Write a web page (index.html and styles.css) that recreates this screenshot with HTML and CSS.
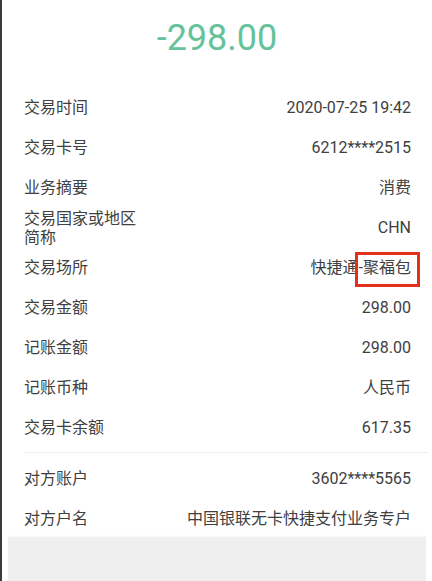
FILE: index.html
```html
<!DOCTYPE html>
<html lang="zh">
<head>
<meta charset="utf-8">
<link rel="stylesheet" href="styles.css">
</head>
<body>
<div class="page">
  <div class="amount">-298.00</div>
  <div class="group">
    <div class="row"><span class="label">交易时间</span><span class="value">2020-07-25 19:42</span></div>
    <div class="row"><span class="label">交易卡号</span><span class="value">6212****2515</span></div>
    <div class="row"><span class="label">业务摘要</span><span class="value">消费</span></div>
    <div class="row"><span class="label two">交易国家或地区<br>简称</span><span class="value">CHN</span></div>
    <div class="row"><span class="label">交易场所</span><span class="value mark-wrap">快捷通-聚福包<span class="mark"></span></span></div>
    <div class="row"><span class="label">交易金额</span><span class="value">298.00</span></div>
    <div class="row"><span class="label">记账金额</span><span class="value">298.00</span></div>
    <div class="row"><span class="label">记账币种</span><span class="value">人民币</span></div>
    <div class="row"><span class="label">交易卡余额</span><span class="value">617.35</span></div>
  </div>
  <div class="divider"></div>
  <div class="group second">
    <div class="row"><span class="label">对方账户</span><span class="value">3602****5565</span></div>
    <div class="row"><span class="label">对方户名</span><span class="value">中国银联无卡快捷支付业务专户</span></div>
  </div>
  <div class="footer"></div>
</div>
</body>
</html>
```
FILE: styles.css
```css
html, body {
  margin: 0;
  padding: 0;
  background: #ffffff;
}
body {
  font-family: Roboto, "Noto Sans CJK SC", sans-serif;
  color: #404040;
  width: 432px;
  height: 581px;
  overflow: hidden;
}
.page {
  border-left: 2px solid #3a3a3a;
  height: 581px;
  box-sizing: border-box;
  display: flex;
  flex-direction: column;
}
.amount {
  height: 88px;
  box-sizing: border-box;
  padding-top: 16px;
  text-align: center;
  font-size: 36px;
  line-height: 44px;
  color: #66c29a;
}
.group {
  padding: 0 21px 0 22px;
}
.row {
  height: 40px;
  display: flex;
  align-items: center;
  justify-content: space-between;
  font-size: 16px;
}
.label {
  line-height: 20px;
}
.label.two {
  line-height: 19px;
}
.value {
  line-height: 20px;
}
.mark-wrap {
  position: relative;
}
.mark {
  position: absolute;
  right: -9px;
  top: -6px;
  width: 65px;
  height: 35px;
  box-sizing: border-box;
  border: 3px solid #e2301c;
}
.divider {
  height: 1px;
  background: #ececec;
  margin: 4px 4px 6px 22px;
}
.second {
  margin-bottom: -2px;
}
.footer {
  flex: 1;
  background: #efefef;
  margin: 0 6px 0 6px;
  box-shadow: 0 -1px 2px rgba(0,0,0,0.04);
}
```
